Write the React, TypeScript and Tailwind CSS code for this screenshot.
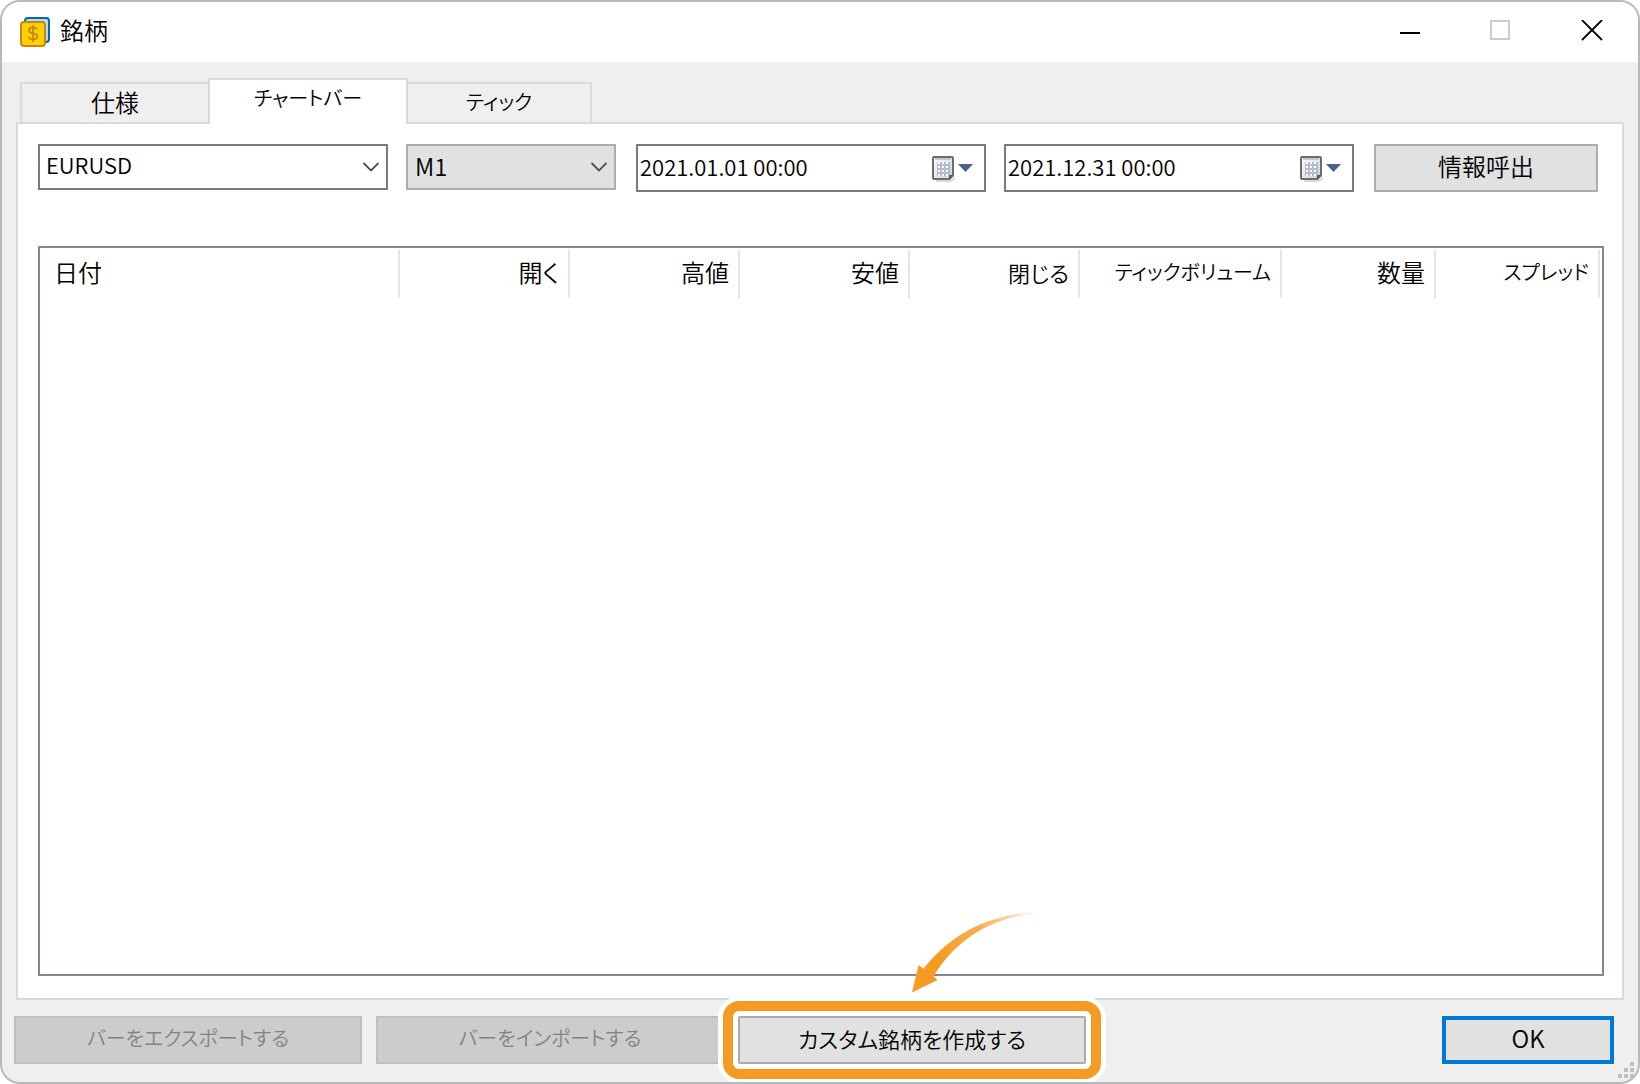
import { useState } from 'react'

const TABS = [
  { id: 'spec', label: '仕様', width: 'w-[188px]', size: 'text-[24px]' },
  { id: 'bars', label: 'チャートバー', width: 'w-[200px]', size: 'text-[20px]' },
  { id: 'ticks', label: 'ティック', width: 'w-[184px]', size: 'text-[20px]' },
]

const COLUMNS = [
  { label: '日付', width: 'w-[360px]', size: 'text-[24px]' },
  { label: '開く', width: 'w-[170px]', size: 'text-[24px]' },
  { label: '高値', width: 'w-[170px]', size: 'text-[24px]' },
  { label: '安値', width: 'w-[170px]', size: 'text-[24px]' },
  { label: '閉じる', width: 'w-[170px]', size: 'text-[22px]' },
  { label: 'ティックボリューム', width: 'w-[202px]', size: 'text-[20px]' },
  { label: '数量', width: 'w-[154px]', size: 'text-[24px]' },
  { label: 'スプレッド', width: 'w-[164px]', size: 'text-[20px]' },
]

function AppIcon() {
  return (
    <svg className="h-[30px] w-[30px]" viewBox="0 0 30 30" fill="none">
      <rect x="5" y="1" width="24" height="24" rx="3" fill="#b5dcf5" stroke="#0a64ad" strokeWidth="2" />
      <rect x="1" y="5" width="24" height="24" rx="3" fill="#ffd000" stroke="#c8860a" strokeWidth="2" />
      <path
        d="M17 12.5C16.5 11 15 10.5 13 10.5C10.5 10.5 9 11.7 9 13.4C9 17.6 17.2 15 17.2 19.3C17.2 21.2 15.5 22.4 13 22.4C10.8 22.4 9.2 21.6 8.8 20M13 8V25"
        stroke="#c8860a"
        strokeWidth="1.8"
      />
    </svg>
  )
}

function Chevron() {
  return (
    <svg className="h-[10px] w-[18px]" viewBox="0 0 18 10" fill="none">
      <path d="M1.5 1L9 8.5L16.5 1" stroke="#505050" strokeWidth="1.8" />
    </svg>
  )
}

function CalendarIcon() {
  return (
    <svg className="h-[28px] w-[42px]" viewBox="0 -2 42 28" fill="none">
      <defs>
        <linearGradient id="sheet" x1="0" y1="0" x2="1" y2="1">
          <stop offset="0" stopColor="#ffffff" />
          <stop offset="1" stopColor="#c3cde4" />
        </linearGradient>
      </defs>
      <path d="M4 25H19L23 22" stroke="#000" strokeOpacity="0.15" strokeWidth="2" />
      <path d="M2 1H20Q21 1 21 2V19.5L17.5 23H2Q1 23 1 22V2Q1 1 2 1Z" fill="url(#sheet)" stroke="#75696a" strokeWidth="2" />
      <path d="M3 3H19" stroke="#c5c7d2" strokeWidth="2" />
      <rect x="5" y="6" width="13" height="14" fill="#b4bccd" />
      {[8, 12, 16, 20].map((y) => (
        <path key={y} d={`M6 ${y - 1}H18`} stroke="#fff" strokeWidth="2" strokeDasharray="2 2" />
      ))}
      <path d="M17 23V19H21Z" fill="#5d5257" />
      <path d="M26 8H41L33.5 16Z" fill="#47608c" />
    </svg>
  )
}

function DateField({ label, value }: { label: string; value: string }) {
  return (
    <div className="flex h-12 min-w-0 flex-[350_1_350px] items-center border-2 border-[#7a7a7a] bg-white pr-[10px]">
      <input
        type="text"
        aria-label={label}
        defaultValue={value}
        className="h-full min-w-0 flex-1 bg-transparent pb-1 pl-[2px] text-[22px] outline-none"
      />
      <button type="button" aria-label={`${label}を選択`}>
        <CalendarIcon />
      </button>
    </div>
  )
}

function PointerArrow() {
  return (
    <svg className="pointer-events-none absolute -top-[108px] left-1/2 z-20 h-[88px] w-[134px]" viewBox="0 0 134 88">
      <defs>
        <linearGradient id="fade" gradientUnits="userSpaceOnUse" x1="30" y1="60" x2="132" y2="4">
          <stop offset="0" stopColor="#f59a23" />
          <stop offset="0.45" stopColor="#f59a23" stopOpacity="0.8" />
          <stop offset="1" stopColor="#f59a23" stopOpacity="0" />
        </linearGradient>
      </defs>
      <path
        d="M0 84.500L6.500 57L11.500 60.800C36 30 73 4 132 4.300C78 8 43 33 21.500 68.300L25.500 72Z"
        fill="url(#fade)"
      />
    </svg>
  )
}

export default function App() {
  const [activeTab, setActiveTab] = useState('bars')

  return (
    <div className="bg-white font-['Noto_Sans_CJK_JP','Liberation_Sans',sans-serif] font-[350] text-black [font-feature-settings:'palt']">
      <div className="relative flex min-h-screen flex-col overflow-hidden rounded-[20px] border-2 border-[#b9b9b9] bg-[#efefef]">
        <header className="flex h-[60px] items-center bg-white pl-[18px]">
          <AppIcon />
          <h1 className="ml-[10px] flex-1 pb-1 text-[24px] leading-[30px] font-[350]">銘柄</h1>
          <button type="button" aria-label="最小化" className="flex h-full w-[92px] items-center justify-center">
            <svg className="h-6 w-6" viewBox="0 0 24 24" stroke="#000" strokeWidth="2">
              <path d="M4 13H24" />
            </svg>
          </button>
          <button type="button" aria-label="最大化" disabled className="flex h-full w-[92px] items-center justify-center">
            <svg className="h-6 w-6" viewBox="0 0 24 24" fill="none" stroke="#cccccc" strokeWidth="2">
              <path d="M3 1H21V19H3Z" />
            </svg>
          </button>
          <button type="button" aria-label="閉じる" className="flex h-full w-[92px] items-center justify-center">
            <svg className="h-6 w-6" viewBox="0 0 24 24" stroke="#000" strokeWidth="1.8">
              <path d="M2 0L22 20M22 0L2 20" />
            </svg>
          </button>
        </header>

        <main className="flex flex-1 flex-col px-[14px] pt-4">
          <div role="tablist" className="flex items-end pl-1">
            {TABS.map((tab, index) => {
              const active = tab.id === activeTab
              return (
                <button
                  key={tab.id}
                  type="button"
                  role="tab"
                  aria-selected={active}
                  onClick={() => setActiveTab(tab.id)}
                  className={`${tab.width} ${tab.size} border-[#dadada] leading-[30px] ${
                    active
                      ? 'relative z-10 -mb-[2px] h-[46px] border-2 border-b-0 bg-white pb-2'
                      : `h-10 border-t-2 pb-[2px] ${index === 0 ? 'border-l-2' : 'border-r-2'}`
                  }`}
                >
                  {tab.label}
                </button>
              )
            })}
          </div>

          <section className="flex flex-1 flex-col border-2 border-[#dadada] bg-white px-5 pt-5 pb-[22px]">
            <div className="flex items-start pr-1">
              <div className="relative h-[46px] flex-[350_1_350px]">
                <select
                  aria-label="銘柄"
                  className="h-full w-full appearance-none border-2 border-[#7a7a7a] bg-white pb-[6px] pl-[6px] text-[22px] leading-[30px]"
                >
                  <option>EURUSD</option>
                </select>
                <span className="pointer-events-none absolute inset-y-0 right-2 flex items-center">
                  <Chevron />
                </span>
              </div>
              <div className="relative ml-[18px] h-[46px] flex-[210_1_210px]">
                <select
                  aria-label="時間足"
                  className="h-full w-full appearance-none border-2 border-[#adadad] bg-[#e1e1e1] pb-[2px] pl-[7px] text-[24px] leading-[30px]"
                >
                  <option>M1</option>
                </select>
                <span className="pointer-events-none absolute inset-y-0 right-2 flex items-center">
                  <Chevron />
                </span>
              </div>
              <div className="ml-5 flex flex-[718_1_718px] gap-[18px]">
                <DateField label="開始日" value="2021.01.01 00:00" />
                <DateField label="終了日" value="2021.12.31 00:00" />
              </div>
              <button
                type="button"
                className="ml-5 h-12 flex-[224_1_224px] border-2 border-[#adadad] bg-[#e1e1e1] pb-1 text-[24px] leading-[30px]"
              >
                情報呼出
              </button>
            </div>

            <div className="mt-[54px] -mr-[2px] flex-1 border-2 border-[#828790] bg-white pt-[2px] pr-[2px]">
              <table className="w-full table-fixed border-separate border-spacing-0">
                <thead>
                  <tr>
                    {COLUMNS.map((column, index) => (
                      <th
                        key={column.label}
                        scope="col"
                        className={`${column.width} ${column.size} h-12 border-r-2 border-[#e5e5e5] pr-[9px] pb-1 leading-[30px] font-[350] whitespace-nowrap ${
                          index === 0 ? 'pl-[14px] text-left' : 'text-right'
                        }`}
                      >
                        {column.label}
                      </th>
                    ))}
                  </tr>
                </thead>
                <tbody />
              </table>
            </div>
          </section>
        </main>

        <footer className="flex pt-4 pr-6 pb-[18px] pl-3 leading-[30px]">
          <button
            type="button"
            disabled
            className="h-12 flex-[348_1_348px] border-2 border-[#bfbfbf] bg-[#cccccc] pb-1 text-[20px] text-[#838383]"
          >
            バーをエクスポートする
          </button>
          <button
            type="button"
            disabled
            className="ml-[14px] h-12 flex-[348_1_348px] border-2 border-[#bfbfbf] bg-[#cccccc] pb-1 text-[20px] text-[#838383]"
          >
            バーをインポートする
          </button>
          <div className="relative ml-[14px] flex-[348_1_348px]">
            <div className="pointer-events-none absolute -inset-5 rounded-[22px] bg-white" />
            <div className="pointer-events-none absolute -inset-[15px] rounded-[16px] border-10 border-[#f59a23]" />
            <button
              type="button"
              className="relative h-12 w-full rounded-[2px] border-2 border-[#adadad] bg-[#e1e1e1] pb-1 text-[22px]"
            >
              カスタム銘柄を作成する
            </button>
            <PointerArrow />
          </div>
          <div className="flex-[356_1_356px]" />
          <button type="button" className="h-12 flex-[172_1_172px] border-4 border-[#0078d7] bg-[#e1e1e1] pb-1 text-[24px]">
            OK
          </button>
        </footer>

        <svg className="absolute right-1 bottom-1 h-4 w-4" viewBox="0 0 16 16" fill="#bfbfbf">
          <path d="M12 0h4v4h-4zM6 6h4v4h-4zM12 6h4v4h-4zM0 12h4v4h-4zM6 12h4v4h-4zM12 12h4v4h-4z" />
        </svg>
      </div>
    </div>
  )
}
